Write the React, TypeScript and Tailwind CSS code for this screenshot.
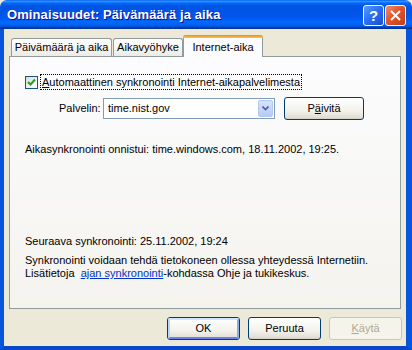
import React from "react";

const TitleBar = () => (
  <div className="h-[29px] shrink-0 rounded-t-[7px] bg-[linear-gradient(to_bottom,#0058EE_0%,#3593FF_4%,#288EFF_6%,#127DFF_8%,#036FFC_10%,#0262EE_14%,#0057E5_20%,#0054E3_24%,#0055EB_56%,#005BF5_66%,#026AFE_76%,#0062EF_86%,#0052D6_92%,#0040AB_94%,#003092_100%)] flex items-center pl-[7px] pr-[6px]">
    <span className="flex-1 text-white font-bold text-[13px] font-['Liberation_Sans',sans-serif] [text-shadow:1px_1px_0_#0F1089] tracking-[0.1px]">
      Ominaisuudet: Päivämäärä ja aika
    </span>
    <div className="flex gap-[1px] mt-[1px]">
      <div className="w-[21px] h-[21px] rounded-[3px] border border-white bg-[linear-gradient(135deg,#5A9BFF_0%,#2A6CF0_50%,#1A4FD2_100%)] flex items-center justify-center text-white font-bold text-[15px] leading-none">
        ?
      </div>
      <div className="w-[21px] h-[21px] rounded-[3px] border border-white bg-[linear-gradient(135deg,#EE9070_0%,#E0552E_45%,#C23E17_100%)] flex items-center justify-center">
        <svg width="11" height="11" viewBox="0 0 11 11">
          <path d="M1 1L10 10M10 1L1 10" stroke="white" strokeWidth="2" />
        </svg>
      </div>
    </div>
  </div>
);

const Btn = ({
  children,
  w = "w-[73px]",
  def = false,
  disabled = false,
}: {
  children: React.ReactNode;
  w?: string;
  def?: boolean;
  disabled?: boolean;
}) => (
  <div
    className={`${w} h-[23px] rounded-[3px] border flex items-center justify-center ${
      disabled
        ? "border-[#C9C7BA] bg-[#F5F4EA] text-[#ACA899]"
        : "border-[#003C74] bg-[linear-gradient(to_bottom,#FFFFFF_0%,#F3F2EC_60%,#E3E1D8_90%,#D6D0C5_100%)] text-black"
    }`}
  >
    <div
      className={`w-full h-full rounded-[2px] flex items-center justify-center ${
        def ? "border-2 border-t-[#CEE7FF] border-l-[#BCD4F6] border-r-[#89ADE4] border-b-[#6982EE]" : ""
      }`}
    >
      {children}
    </div>
  </div>
);

export default function App() {
  return (
    <div className="w-[412px] h-[350px] overflow-hidden flex flex-col bg-[#ECE9D8] font-['Liberation_Sans',sans-serif] text-[11px] text-black">
      <TitleBar />
      <div className="flex-1 flex flex-col border-l-4 border-r-[6px] border-b-4 border-l-[#0855DD] border-r-[#0855DD] border-b-[#0848C8] bg-[#ECE9D8]">
        {/* tabs */}
        <div className="flex items-end h-[21px] mt-[6px] ml-[7px] relative z-10">
          <div className="w-[101px] h-[18px] border border-b-0 border-[#919B9C] rounded-t-[3px] bg-[linear-gradient(to_bottom,#FFFFFF,#ECEBE6)] flex items-center justify-center">
            Päivämäärä ja aika
          </div>
          <div className="w-[70px] h-[18px] ml-[1px] border border-b-0 border-[#919B9C] rounded-t-[3px] bg-[linear-gradient(to_bottom,#FFFFFF,#ECEBE6)] flex items-center justify-center">
            Aikavyöhyke
          </div>
          <div className="w-[80px] h-[22px] -mb-px border-x border-[#919B9C] rounded-t-[3px] bg-[#FCFCFE] flex flex-col">
            <div className="h-[3px] rounded-t-[3px] bg-[linear-gradient(to_bottom,#E68B2C,#FFC83C)] -mx-px" />
            <div className="flex-1 flex items-center justify-center pb-[1px]">Internet-aika</div>
          </div>
        </div>
        {/* panel */}
        <div className="w-[392px] h-[253px] ml-[5px] border border-[#919B9C] bg-[linear-gradient(to_bottom,#FCFCFE,#F4F3EE)] flex flex-col">
          <div className="flex h-[16px] mt-[17px] pl-[15px]">
            <div className="w-[13px] h-[13px] mt-[2px] border border-[#1C5180] bg-[linear-gradient(135deg,#DCDCD7,#FFFFFF)] flex items-center justify-center">
              <svg width="9" height="9" viewBox="0 0 9 9">
                <path d="M1 4L3.5 6.5L8 1.5" stroke="#21A121" strokeWidth="2" fill="none" />
              </svg>
            </div>
            <div className="ml-[2px] h-[16px] border border-dotted border-black px-[1px] flex items-center">
              <span>
                <span className="underline">A</span>utomaattinen synkronointi Internet-aikapalvelimesta
              </span>
            </div>
          </div>
          <div className="flex items-center h-[23px] mt-[7px] pl-[49px]">
            <div className="w-[44px]">Palvelin:</div>
            <div className="w-[172px] h-[21px] border border-[#7F9DB9] bg-white flex items-center pl-[4px] pr-[1px]">
              <span className="flex-1">time.nist.gov</span>
              <div className="w-[15px] h-[17px] rounded-[2px] border border-[#B5C8F2] bg-[linear-gradient(to_bottom,#D6E3FD,#B6CAF7)] flex items-center justify-center">
                <svg width="7" height="5" viewBox="0 0 7 5">
                  <path d="M0.5 0.5L3.5 3.5L6.5 0.5" stroke="#4D6185" strokeWidth="1.6" fill="none" />
                </svg>
              </div>
            </div>
            <div className="ml-[9px]">
              <Btn w="w-[80px]">
                P<span className="underline">ä</span>ivitä
              </Btn>
            </div>
          </div>
          <div className="mt-[23px] pl-[15px] leading-[13px]">
            Aikasynkronointi onnistui: time.windows.com, 18.11.2002, 19:25.
          </div>
          <div className="mt-[79px] pl-[15px] leading-[13px]">Seuraava synkronointi: 25.11.2002, 19:24</div>
          <div className="mt-[6px] pl-[15px] leading-[13px]">
            <div>Synkronointi voidaan tehdä tietokoneen ollessa yhteydessä Internetiin.</div>
            <div>
              Lisätietoja&nbsp;&nbsp;<span className="text-[#0033CC] underline">ajan synkronointi</span>-kohdassa Ohje ja
              tukikeskus.
            </div>
          </div>
        </div>
        {/* buttons */}
        <div className="flex justify-end gap-[8px] pr-[4px] mt-[8px]">
          <Btn def>OK</Btn>
          <Btn>Peruuta</Btn>
          <Btn disabled>
            <span>
              <span className="underline">K</span>äytä
            </span>
          </Btn>
        </div>
      </div>
    </div>
  );
}
